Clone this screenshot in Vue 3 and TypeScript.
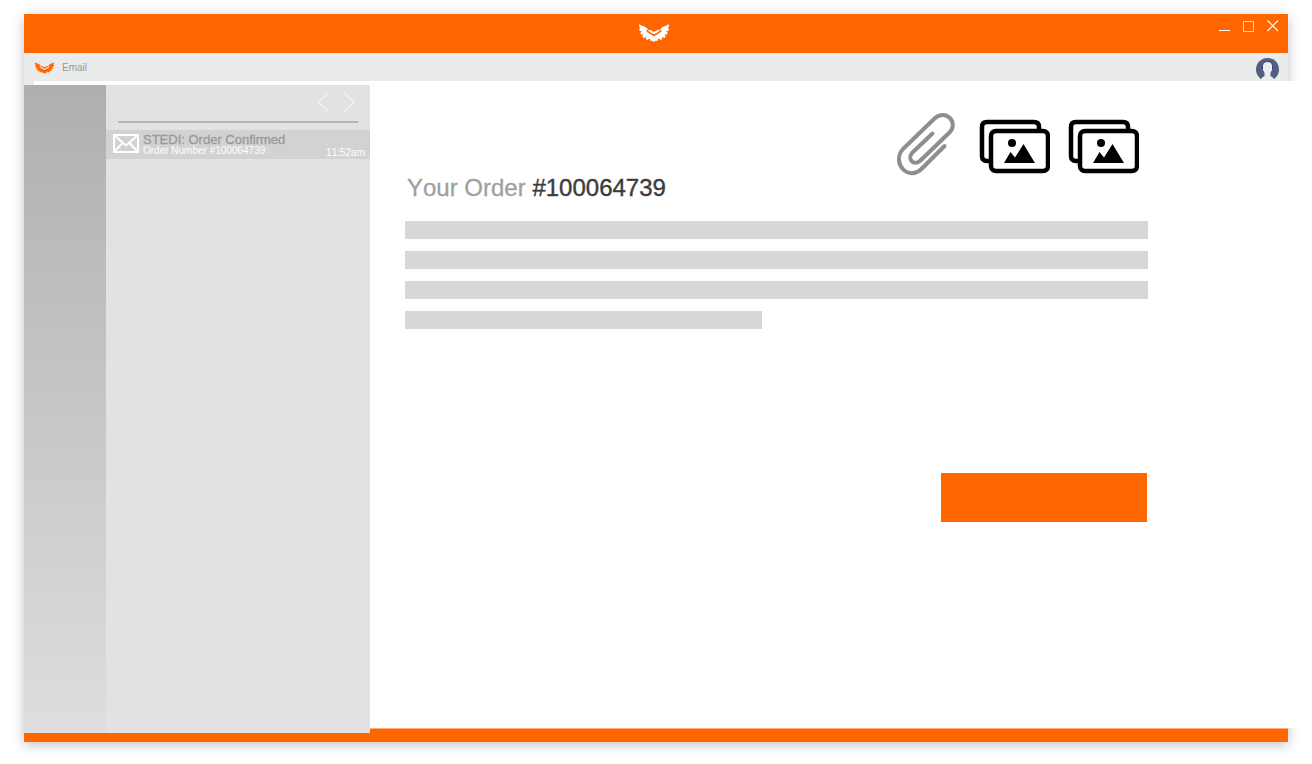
<script setup lang="ts">
interface Message {
  subject: string
  detail: string
  time: string
}

const messages: Message[] = [
  { subject: 'STEDI: Order Confirmed', detail: 'Order Number #100064739', time: '11:52am' },
]
const orderNumber = '#100064739'
const attachments: number[] = [1, 2]
const wings =
  'M0 1 L9 5 L18 8 L24 13 L27 18 L33 17 L45 24 L57 17 L63 18 L66 13 L72 8 L81 5 L90 1 L89 9 L86 12 L90 15 L87 21 L81 22 L86 26 L83 32 L76 31 L80 37 L76 42 L68 38 L70 45 L65 48 L58 43 L56 50 L50 50 L45 54 L40 50 L34 50 L32 43 L25 48 L20 45 L22 38 L14 42 L10 37 L14 31 L7 32 L4 26 L9 22 L3 21 L0 15 L4 12 L1 9 Z'
</script>

<template>
  <div class="window">
    <header class="titlebar">
      <span></span>
      <svg class="brand" viewBox="0 0 90 54" aria-hidden="true">
        <path :d="wings" fill="#fff" />
        <path d="M23 19 L31 26 L45 34 L59 26 L67 19" fill="none" stroke="#ff6600" stroke-width="5" />
      </svg>
      <div class="controls">
        <button type="button" aria-label="Minimize">
          <svg viewBox="0 0 12 12"><path d="M0 10.5H11" /></svg>
        </button>
        <button type="button" aria-label="Maximize">
          <svg viewBox="0 0 12 12"><path d="M.5 1.5H10.5V11.5H.5Z" stroke-width=".7" /></svg>
        </button>
        <button type="button" aria-label="Close">
          <svg viewBox="0 0 12 12"><path d="M.5 .5L11 11M11 .5L.5 11" stroke-width="1.2" /></svg>
        </button>
      </div>
    </header>

    <div class="toolbar">
      <svg class="mark" viewBox="0 0 90 54" aria-hidden="true">
        <path :d="wings" fill="#ff6600" />
        <path d="M23 19 L31 26 L45 34 L59 26 L67 19" fill="none" stroke="#ebebeb" stroke-width="5" />
      </svg>
      <span class="app-name">Email</span>
      <button class="account" type="button" aria-label="Account">
        <svg viewBox="0 0 23 23">
          <circle cx="11.5" cy="11.5" r="11.5" fill="#535e83" />
          <path d="M4.500 23 Q5 19.500 8.500 18 V14.500 Q6.500 12.500 6.500 9 Q6 3.500 11.500 3.500 Q17 3.500 16.500 9 Q16.500 12.500 14.500 14.500 V18 Q18 19.500 18.500 23Z" fill="#e9eeee" />
          <path d="M6.500 11 Q5.500 3.500 11.500 3.500 Q17.500 3.500 16.500 11" fill="none" stroke="#35406c" stroke-width="1" />
        </svg>
      </button>
    </div>

    <div class="body">
      <aside class="rail"></aside>
      <section class="inbox">
        <nav class="pager">
          <button type="button" aria-label="Previous">
            <svg viewBox="0 0 12 20"><path d="M11.500 .5L1.500 10L11.500 19.500" /></svg>
          </button>
          <button type="button" aria-label="Next">
            <svg viewBox="0 0 12 20"><path d="M1 .5L11 10L1 19.500" /></svg>
          </button>
        </nav>
        <article v-for="message in messages" :key="message.detail" class="message">
          <svg class="envelope" viewBox="0 0 26 19" aria-hidden="true">
            <path d="M1 1H25V18H1ZM1 1L13 11.500L25 1M1 18L9.500 9M25 18L16.500 9" />
          </svg>
          <div class="summary">
            <h2>{{ message.subject }}</h2>
            <p>{{ message.detail }}</p>
          </div>
          <time>{{ message.time }}</time>
        </article>
      </section>

      <main class="reader">
        <div class="attachments">
          <svg class="clip" viewBox="0 0 60 66" aria-hidden="true">
            <path d="M36.500 21.500 L17 40 C10 47 18 55 25 48 L53.500 20.500 C63 11 50 -4 38.500 6.500 L7 37 C-5 50 12 71 26.500 56 L48.500 34" />
          </svg>
          <svg v-for="item in attachments" :key="item" class="picture" viewBox="0 0 72 58" aria-hidden="true">
            <path d="M12 45H9Q4 45 4 40V11Q4 6 9 6H56Q61 6 61 11V15" fill="none" stroke="#000" stroke-width="4.500" />
            <rect x="13" y="15" width="57" height="40" rx="5" fill="#fff" stroke="#000" stroke-width="4.500" />
            <circle cx="34" cy="27" r="4" />
            <path d="M26 47L32.500 36L37 41.500L45.500 28L57 47Z" />
          </svg>
        </div>
        <h1>Your Order <span>{{ orderNumber }}</span></h1>
        <div class="lines">
          <div class="line"></div>
          <div class="line"></div>
          <div class="line"></div>
          <div class="line short"></div>
        </div>
        <button class="action" type="button" aria-label="View order"></button>
      </main>
    </div>
  </div>
</template>

<style>
body {
  margin: 0;
  background: #fff;
  overflow-x: hidden;
}
</style>

<style scoped>
* {
  box-sizing: border-box;
}
button {
  display: block;
  padding: 0;
  border: 0;
  background: none;
  cursor: pointer;
}
svg {
  display: block;
}
h1,
h2,
p {
  margin: 0;
  font-weight: 400;
}
.window {
  display: flex;
  flex-direction: column;
  min-height: calc(100vh - 36px);
  margin: 14px 24px 22px;
  background: #ff6600;
  box-shadow: 0 3px 12px rgba(0, 0, 0, 0.24);
  font-family: 'Liberation Sans', Arial, sans-serif;
  font-kerning: none;
}
.titlebar {
  display: grid;
  grid-template-columns: 1fr 30px 1fr;
  height: 39px;
  padding: 0 9px 0 5px;
}
.brand {
  width: 30px;
  height: 18px;
  margin-top: 10px;
}
.controls {
  display: flex;
  justify-content: flex-end;
  gap: 12px;
  padding-top: 6px;
}
.controls svg {
  width: 12px;
  height: 12px;
  fill: none;
  stroke: #fff;
}
.controls button {
  height: 12px;
}
.toolbar {
  position: relative;
  display: flex;
  align-items: flex-start;
  height: 32px;
  padding: 0 9px 0 11px;
  background: #ebebeb;
}
.toolbar::after {
  content: '';
  position: absolute;
  left: 10px;
  right: -24px;
  bottom: 0;
  height: 4px;
  background: #fff;
}
.mark {
  width: 19px;
  height: 12px;
  margin-top: 9px;
}
.app-name {
  margin: 9px auto 0 8px;
  color: #999;
  font-size: 10px;
  line-height: 12px;
}
.account {
  margin-top: 5px;
}
.account svg {
  width: 23px;
  height: 23px;
}
.body {
  display: flex;
  flex: 1;
  margin-bottom: 9px;
}
.rail {
  flex: 0 0 82px;
  background: linear-gradient(#afafaf, #dedede);
}
.inbox {
  flex: 0 0 264px;
  background: #e2e2e2;
}
.pager {
  display: flex;
  justify-content: flex-end;
  gap: 14px;
  height: 38px;
  margin: 0 12px 7px;
  padding: 7px 3px 0 0;
  border-bottom: 2px solid #b5b5b5;
}
.pager svg {
  width: 12px;
  height: 20px;
  fill: none;
  stroke: #fff;
}
.pager button {
  height: 20px;
}
.message {
  display: flex;
  height: 29px;
  padding: 0 5px 0 7px;
  background: #d2d2d2;
  color: #fff;
  font-size: 10px;
  line-height: 10px;
}
.envelope {
  width: 26px;
  height: 19px;
  margin: 4px 4px 0 0;
  fill: none;
  stroke: #fff;
  stroke-width: 2;
}
.summary {
  flex: 1;
  padding-top: 4px;
  white-space: nowrap;
}
.message h2 {
  color: #999;
  font-size: 13px;
  line-height: 12px;
  -webkit-text-stroke: 0.3px #999;
}
.message time {
  align-self: flex-end;
  padding-bottom: 1px;
}
.reader {
  position: relative;
  flex: 1;
  display: flex;
  flex-direction: column;
  min-width: 0;
  margin: -4px -24px 5px 0;
  padding: 31px 164px 0 35px;
  background: #fff;
}
.reader::after {
  content: '';
  position: absolute;
  left: 0;
  right: 24px;
  bottom: -1px;
  height: 1px;
  background: #ffad78;
}
.attachments {
  display: flex;
  align-items: center;
  justify-content: flex-end;
  gap: 17px;
  height: 66px;
  padding-right: 9px;
}
.clip {
  width: 60px;
  height: 66px;
  margin-right: 5px;
  fill: none;
  stroke: #8e8e8e;
  stroke-width: 4;
  stroke-linecap: round;
  stroke-linejoin: round;
}
.picture {
  width: 72px;
  height: 58px;
}
.reader h1 {
  margin: -4px 0 19px 2px;
  color: #a0a0a0;
  font-size: 24px;
  line-height: 28px;
  -webkit-text-stroke: 0.3px #a0a0a0;
}
.reader h1 span {
  color: #3c3c3c;
  -webkit-text-stroke: 0.4px #3c3c3c;
}
.lines {
  display: grid;
  gap: 12px;
}
.line {
  height: 18px;
  background: #d7d7d7;
}
.line.short {
  width: 48%;
}
.action {
  align-self: flex-end;
  width: 206px;
  height: 49px;
  margin: 144px 1px 0 0;
  background: #ff6600;
}
</style>
